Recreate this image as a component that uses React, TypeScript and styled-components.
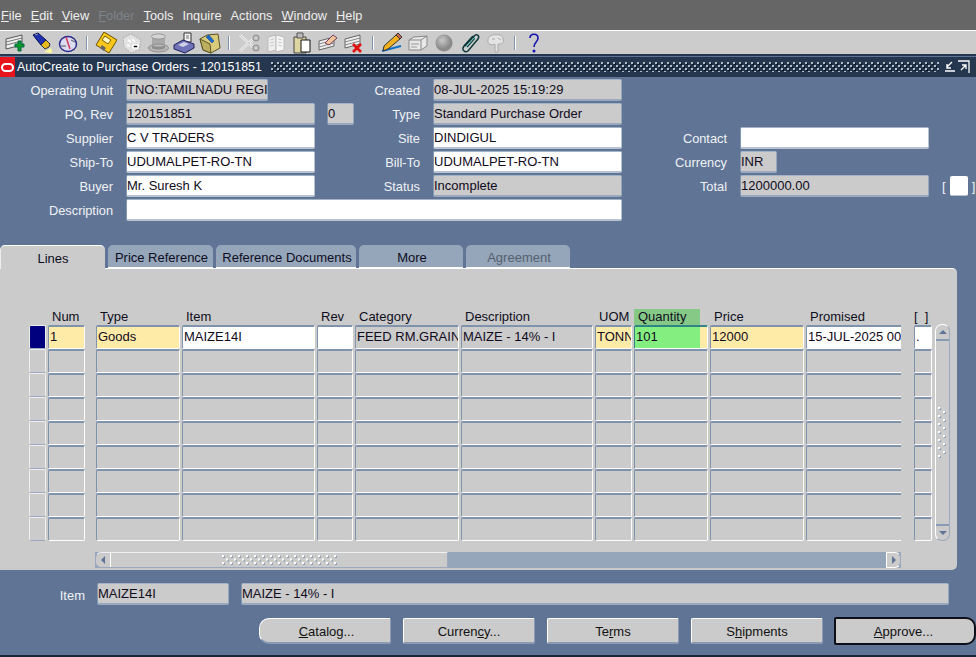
import React from "react";
import styled, { createGlobalStyle, css } from "styled-components";

const Global = createGlobalStyle`
  html, body { margin: 0; padding: 0; background: #607595; }
  #root { width: 976px; height: 657px; overflow: hidden; }
`;
const dots = (w: number, h: number, light: string, dark: string) => css`
  background-image:
    radial-gradient(circle at 1px 1px, ${light} 1px, transparent 1.1px),
    radial-gradient(circle at 1px 1px, ${light} 1px, transparent 1.1px),
    radial-gradient(circle at 2px 2px, ${dark} 1px, transparent 1.1px),
    radial-gradient(circle at 2px 2px, ${dark} 1px, transparent 1.1px);
  background-size: ${w}px ${h}px;
  background-position: 0 0, ${w / 2}px ${h / 2}px, 0 0, ${w / 2}px ${h / 2}px;
`;
const Page = styled.div`
  width: 976px; height: 657px; display: flex; flex-direction: column; position: relative;
  background: #607595; font-family: "Liberation Sans", Arial, sans-serif; font-size: 13px; color: #000; overflow: hidden;
  border-bottom: 2px solid #1a2436; box-sizing: border-box;
`;
const MenuBar = styled.div`
  height: 30px; background: #666; display: flex; gap: 9px; align-items: flex-start; padding: 8px 0 0 1px; box-sizing: border-box;
  color: #eee; font-size: 12.8px; line-height: 15px; flex: none;
`;
const MenuItem = styled.span<{ $off?: boolean }>`
  ${p => p.$off && css`color: #7d838b;`}
  u { text-underline-offset: 1px; }
`;
const ToolBar = styled.div`
  height: 23px; background: #ccc; border-top: 1px solid #fff; border-bottom: 2px solid #25364f; flex: none;
  display: flex; align-items: center; padding-left: 5px; margin-bottom: 1px;
`;
const Icon = styled.svg<{ $w?: number; $mr?: number }>`
  width: ${p => p.$w ?? 22}px; height: 22px; flex: none; margin-right: ${p => p.$mr ?? 4}px;
`;
const Sep = styled.i`
  width: 2px; height: 14px; background: linear-gradient(to right, #7f93ad 50%, #fff 50%); flex: none; margin: 0 7px 0 3px;
`;
const TitleBar = styled.div`
  height: 20px; background: #25364f; display: flex; align-items: center; color: #fff; font-size: 12.3px; flex: none; padding-right: 5px;
`;
const Logo = styled.div`
  width: 15px; height: 20px; background: #e8141c; display: flex; align-items: center; justify-content: center; flex: none;
  &::after { content: ""; width: 9px; height: 5px; border: 2px solid #fff; border-radius: 5px; }
`;
const Title = styled.span`
  margin-left: 2px; white-space: nowrap;
`;
const Dots = styled.div`
  flex: 1; height: 10px; margin: 0 4px 0 9px;
  ${dots(6, 6, "#b4bdca", "#0c1524")}
`;
const WinBtn = styled.svg`
  width: 14px; height: 14px; flex: none;
`;
const Form = styled.div`
  flex: none; height: 168px; padding-top: 2px; display: grid; box-sizing: border-box;
  grid-template-columns: 126px 189px 118px 189px 118px 189px 47px;
  grid-auto-rows: 22px; row-gap: 2px;
`;
const Label = styled.label`
  color: #f0f2f5; text-align: right; padding-right: 13px; line-height: 22px; white-space: nowrap; margin-top: 1px; font-size: 12.8px;
`;
const tones = { ro: "#cbcbcb", white: "#fff", req: "#ffeba8" };
const Field = styled.div<{ $tone?: keyof typeof tones; $w?: number; $ml?: number; $span?: number }>`
  box-sizing: border-box; height: 22px; line-height: 19px; padding: 0; overflow: hidden; white-space: nowrap; font-size: 13px; flex: none;
  background: ${p => tones[p.$tone ?? "ro"]}; color: #100a20;
  border-top: 1px solid #a4b2c6; border-left: 1px solid #8497b1;
  border-right: 1px solid ${p => (p.$tone === "white" ? "#b8c2d0" : "#98a8bf")}; border-bottom: 2px solid ${p => (p.$tone === "white" ? "#b8c2d0" : "#98a8bf")};
  border-radius: 2px;
  ${p => p.$w && css`width: ${p.$w}px;`}
  ${p => p.$ml && css`margin-left: ${p.$ml}px;`}
  ${p => p.$span && css`grid-column: span ${p.$span};`}
`;
const Pair = styled.div`
  display: flex; width: max-content;
`;
const Bracket = styled.div`
  display: flex; align-items: center; gap: 4px; color: #f0f2f5; font-size: 13px; height: 22px; margin-left: 13px;
`;
const Tick = styled.span`
  width: 18px; height: 20px; background: #fff; border-radius: 2px; border-bottom: 1px solid #b8c2d0; box-sizing: border-box; display: block; flex: none;
`;
const TabRow = styled.div`
  flex: none; height: 23px; display: flex; gap: 3px; position: relative; z-index: 1;
`;
const Tab = styled.div<{ $active?: boolean; $off?: boolean; $w: number }>`
  width: ${p => p.$w}px; box-sizing: border-box; display: flex; align-items: center; justify-content: center; height: 23px; font-size: 13px;
  border-radius: 5px 5px 0 0; white-space: nowrap; padding: 2px 0 0 2px;
  background: #95a5ba; color: #0d0d22; border-bottom: 1px solid #fff;
  ${p => p.$off && css`color: #55606e;`}
  ${p => p.$active && css`background: #cbcbcb; border-top: 1px solid #fff; border-bottom: none; height: 24px; border-left: 1px solid #eee; padding: 1px 0 0 0;`}
`;
const Panel = styled.div`
  flex: none; width: 957px; height: 302px; background: #cbcbcb; border-top: 1px solid #fff; border-radius: 0 5px 5px 0; box-sizing: border-box;
  padding-top: 40px; padding-left: 29px; position: relative;
`;
const cols = [
  { n: "Num", w: 37, g: 11 }, { n: "Type", w: 84, g: 2 }, { n: "Item", w: 133, g: 2 }, { n: "Rev", w: 36, g: 2 },
  { n: "Category", w: 104, g: 2 }, { n: "Description", w: 132, g: 2 }, { n: "UOM", w: 37, g: 2 }, { n: "Quantity", w: 74, g: 2 },
  { n: "Price", w: 94, g: 2 }, { n: "Promised", w: 95, g: 13 }, { n: "[  ]", w: 18, g: 3 },
];
const GridWrap = styled.div`
  display: grid; grid-template-columns: 17px 2px ${cols.map(c => `${c.w}px ${c.g}px`).join(" ")};
  grid-template-rows: 16px; grid-auto-rows: 24px; width: max-content;
`;
const Head = styled.div<{ $hl?: boolean; $pad?: number }>`
  font-size: 13px; line-height: 15px; white-space: pre; padding-left: ${p => p.$pad ?? 4}px; color: #0e0e20; height: 16px; box-sizing: border-box;
  ${p => p.$hl && css`background: linear-gradient(to right, #86c886 66px, transparent 66px);`}
`;
const Spacer = styled.div``;
const Cell = styled.div<{ $tone?: "ro" | "white" | "req"; $hl?: boolean; $open?: boolean }>`
  box-sizing: border-box; height: 24px; line-height: 19px; white-space: nowrap; overflow: hidden; padding-left: 1px; font-size: 13px; color: #100a20;
  background: ${p => tones[p.$tone ?? "ro"]};
  border-top: 2px solid #7f93ad; border-left: 1px solid #7f93ad; border-right: 1px solid #fff; border-bottom: 1px solid #fff; border-radius: 2px;
  ${p => p.$hl && css`background: linear-gradient(to right, #84ee80 65px, #ffeba8 65px); border-top-color: #2f8484; border-left-color: #2f8484;`}
  ${p => p.$open && css`border-right: none; border-radius: 2px 0 0 2px;`}
`;
const Sel = styled.div<{ $on?: boolean }>`
  box-sizing: border-box; height: 24px; border: 1px solid #eee; border-bottom-color: #9aa9bd; border-radius: 2px;
  background: ${p => (p.$on ? "#00007f" : "#cbcbcb")};
`;
const VScroll = styled.div`
  position: absolute; left: 935px; top: 55px; width: 15px; height: 217px; background: #cbcbcb; box-sizing: border-box;
  border: 1px solid #9aa9bd; border-left-color: #fff; border-top-color: #fff; border-radius: 7px; display: flex; flex-direction: column; justify-content: space-between; align-items: center;
`;
const VArrow = styled.div<{ $up?: boolean }>`
  width: 100%; height: 14px; display: flex; align-items: center; justify-content: center; flex: none;
  ${p => p.$up ? css`border-bottom: 2px solid #8a9bb3;` : css`border-top: 2px solid #8a9bb3;`}
  &::after { content: ""; border-left: 4px solid transparent; border-right: 4px solid transparent;
    ${p => p.$up ? css`border-bottom: 4px solid #607595;` : css`border-top: 4px solid #607595;`} }
`;
const VGrip = styled.div`
  width: 10px; height: 52px;
  ${dots(10, 8, "#fff", "#8fa0b6")}
`;
const HScroll = styled.div`
  position: absolute; left: 95px; top: 283px; width: 806px; height: 16px; display: flex; background: #95a5ba; box-sizing: border-box;
`;
const HThumb = styled.div`
  width: 353px; height: 100%; background: #cbcbcb; border: 1px solid #9aa9bd; border-top-color: #eef0f3; box-sizing: border-box; display: flex; align-items: center; border-radius: 6px 0 0 6px;
`;
const HLeft = styled.div`
  width: 14px; height: 100%; border-right: 1px solid #fff; display: flex; align-items: center; justify-content: center;
  &::after { content: ""; border-top: 4px solid transparent; border-bottom: 4px solid transparent; border-right: 4px solid #607595; }
`;
const HGrip = styled.div`
  width: 116px; height: 10px; margin-left: 111px;
  ${dots(8, 7, "#fff", "#8fa0b6")}
`;
const HRight = styled.div`
  margin-left: auto; width: 15px; height: 100%; background: #cbcbcb; border: 1px solid #fff; border-right-color: #9aa9bd; border-radius: 0 6px 6px 0; box-sizing: border-box; display: flex; align-items: center; justify-content: center;
  &::after { content: ""; border-top: 4px solid transparent; border-bottom: 4px solid transparent; border-left: 4px solid #607595; }
`;
const Footer = styled.div`
  flex: none; display: flex; align-items: center; height: 22px; margin-top: 13px;
`;
const FootLabel = styled.span`
  color: #f0f2f5; width: 85px; text-align: right; font-size: 13px; margin-right: 12px; margin-top: 2px;
`;
const Buttons = styled.div`
  flex: none; display: flex; gap: 12px; padding-left: 259px; margin-top: 13px; height: 26px;
`;
const Btn = styled.div<{ $first?: boolean; $default?: boolean }>`
  width: 132px; height: 26px; background: #cbcbcb; box-sizing: border-box; display: flex; align-items: center; justify-content: center;
  padding-top: 1px;
  font-size: 13px; color: #111; border-top: 1px solid #fff; border-left: 1px solid #fff; border-right: 1px solid #8a9bb3; border-bottom: 2px solid #8a9bb3; border-radius: 2px; white-space: nowrap; flex: none;
  ${p => p.$first && css`border-radius: 10px 2px 2px 10px; padding-left: 3px;`}
  ${p => p.$default && css`width: 142px; margin-left: -1px; height: 28px; margin-top: -1px; border: 2px solid #0e0e18; border-radius: 2px 10px 10px 2px; padding-right: 3px;`}
`;

const New = () => <Icon viewBox="0 0 22 22"><path d="M1 7l16-4v10L1 17z" fill="#eee" stroke="#555"/><path d="M1 10l16-4M1 13l16-4" stroke="#777"/><path d="M13 9h3v3h3v3h-3v4h-3v-4h-3v-3h3z" fill="#0a9a2a" stroke="#064"/></Icon>;
const Flash = () => <Icon viewBox="0 0 22 22"><path d="M2 3l5-2 8 7-5 5z" fill="#2230b0" stroke="#001050"/><path d="M4 3l3-1" stroke="#99a" /><path d="M10 13l5-5 4 4-1 3-4 2z" fill="#e8b820" stroke="#333"/><path d="M13 20l7-4 1 5z" fill="#ffff99"/></Icon>;
const Compass = () => <Icon viewBox="0 0 22 22"><ellipse cx="11" cy="12" rx="8.5" ry="7.5" fill="#dcdcf0" stroke="#2a2a90" strokeWidth="1.5"/><path d="M9 5l4 12" stroke="#d04060" strokeWidth="1.6"/><path d="M4 14h5M14 8l4 2" stroke="#555"/></Icon>;
const Floppy = () => <Icon viewBox="0 0 22 22"><path d="M9 0l13 8-8 13L1 13z" fill="#fac81c" stroke="#6a5000"/><path d="M10 4l6 4-3 4-6-4z" fill="#fff8c0" stroke="#7a6000"/><path d="M7 13l4 3-2 3-4-3z" fill="#666"/></Icon>;
const Scatter = () => <Icon viewBox="0 0 22 22"><path d="M2 6l8-4 10 6-2 10-8 3-7-6z" fill="#e2e2e2" stroke="#aeaeae" strokeDasharray="2 1"/><path d="M7 8l3 2M11 7l3 3M12 13h5v3h-5zM6 13l3 1" stroke="#fff" strokeWidth="1.6"/></Icon>;
const Hat = () => <Icon viewBox="0 0 22 22"><path d="M5 4v11c2 2 11 2 13 0V4z" fill="#a8a8a8"/><ellipse cx="11.5" cy="4.5" rx="7" ry="2.6" fill="#d4d4d4" stroke="#999"/><ellipse cx="11.5" cy="16" rx="10" ry="4" fill="#b8b8b8" stroke="#8c8c8c"/><path d="M5 13c2 2 11 2 13 0v3c-2 2-11 2-13 0z" fill="#8e8e8e"/></Icon>;
const Printer = () => <Icon viewBox="0 0 22 22"><path d="M11 1h7v9h-7z" fill="#f2f2f2" stroke="#333"/><path d="M13 4h3M13 6h3" stroke="#777"/><path d="M1 13l9-5 11 4v4l-9 5-11-4z" fill="#6f72b6" stroke="#20205a"/><path d="M5 13l6-3 5 2-6 3z" fill="#d0d0e6"/></Icon>;
const Folder = () => <Icon viewBox="0 0 22 22"><path d="M1 7l7-4 11-1 2 14-9 5-8-3z" fill="#d8cc7c" stroke="#5a5220"/><path d="M7 5l6 6 2-2-5-6z" fill="#1a6ad0" stroke="#0a3a80" strokeWidth=".5"/><path d="M1 7l10 5 1 9-8-3z" fill="#bcb060" stroke="#5a5220"/></Icon>;
const Scissors = () => <Icon viewBox="0 0 24 22" $w={24}><path d="M3 3l13 12M3 19L16 7" stroke="#eee" strokeWidth="2.6"/><path d="M3 3l13 12M3 19L16 7" stroke="#aaa" strokeWidth=".6"/><circle cx="19" cy="6" r="2.8" fill="none" stroke="#999" strokeWidth="1.4"/><circle cx="19" cy="16" r="2.8" fill="none" stroke="#999" strokeWidth="1.4"/></Icon>;
const Copy = () => <Icon viewBox="0 0 22 22"><path d="M3 5l8-2v15l-8 2z" fill="#eee" stroke="#bbb"/><path d="M11 3l8 2v13l-8 2z" fill="#f6f6f6" stroke="#bbb"/><path d="M5 8l4-1M5 11l4-1M5 14l4-1M13 7l4 1M13 10l4 1M13 13l4 1" stroke="#ccc"/></Icon>;
const Paste = () => <Icon viewBox="0 0 22 22"><path d="M3 5h12v16H3z" fill="#ddd6a0" stroke="#444"/><path d="M6 1h6v5H6z" fill="#bbb" stroke="#555"/><path d="M10 8h9v12h-9z" fill="#fff" stroke="#111"/></Icon>;
const Erase = () => <Icon viewBox="0 0 22 22"><path d="M2 9l15-4v9L2 18z" fill="#eee" stroke="#666"/><path d="M2 12l15-4M2 15l15-4" stroke="#888"/><path d="M8 11l8-8 4 3-8 7z" fill="#eec49c" stroke="#7a3a5a"/></Icon>;
const Del = () => <Icon viewBox="0 0 22 22"><path d="M2 7l15-4v9L2 16z" fill="#eee" stroke="#666"/><path d="M2 10l15-4M2 13l15-4" stroke="#888"/><path d="M10 12l8 8M18 12l-8 8" stroke="#e01010" strokeWidth="2.6"/></Icon>;
const Pencil = () => <Icon viewBox="0 0 22 22"><path d="M1 19l19-5" stroke="#1070c0" strokeWidth="2"/><path d="M2 19l1-5L15 3l4 4L7 17z" fill="#f0b020" stroke="#333"/><path d="M15 3l2-2 4 4-2 2z" fill="#d06a50" stroke="#333"/></Icon>;
const Box = () => <Icon viewBox="0 0 22 22"><path d="M2 8l5-3 13-1v10l-6 4H2z" fill="#e8e8e8" stroke="#888"/><path d="M2 8h12l6-4M14 8v10" stroke="#888" fill="none"/><path d="M4 12h8M4 15h6" stroke="#999"/></Icon>;
const Globe = () => <Icon viewBox="0 0 22 22"><defs><radialGradient id="g" cx="40%" cy="35%"><stop offset="0" stopColor="#c8c8c8"/><stop offset="1" stopColor="#8a8a8a"/></radialGradient></defs><circle cx="11" cy="11" r="8.5" fill="url(#g)"/></Icon>;
const Clip = () => <Icon viewBox="0 0 22 22"><path d="M6 14l9-10c3-3 6 0 4 3L9 19c-3 2-7-1-4-5l8-9c1-1 3 0 2 2l-7 8" fill="none" stroke="#103838" strokeWidth="1.5"/><path d="M7 15l9-10" stroke="#66d0d0" fill="none"/></Icon>;
const Bulb = () => <Icon viewBox="0 0 22 22" $mr={4}><path d="M3 8c0-4 5-6 8-5 2-1 7 0 7 4 2 3-2 6-5 5v8h-3v-8c-3 2-8 0-7-4z" fill="#e4e4e4" stroke="#aaa"/><path d="M7 7h3M13 6l3 2" stroke="#aaa"/></Icon>;
const Help = () => <Icon viewBox="0 0 22 22" $mr={0}><path d="M7 6c0-5 8-5 8 0 0 4-4 4-4 9" fill="none" stroke="#1414b0" strokeWidth="1.6"/><circle cx="11" cy="19" r="1.5" fill="#1414b0"/></Icon>;

type R = { t: string; tone?: "ro" | "white" | "req" };
const first: R[] = [
  { t: "1", tone: "req" }, { t: "Goods", tone: "req" }, { t: "MAIZE14I", tone: "white" }, { t: "", tone: "white" },
  { t: "FEED RM.GRAINS.MAIZE" }, { t: "MAIZE - 14% - I" }, { t: "TONNE", tone: "req" }, { t: "101", tone: "req" },
  { t: "12000", tone: "req" }, { t: "15-JUL-2025 00:00:00", tone: "white" }, { t: ".", tone: "white" },
];
const menus = ["File", "Edit", "View", "Folder", "Tools", "Inquire", "Actions", "Window", "Help"];
const plain: Record<string, boolean> = { Inquire: true, Actions: true };

export default function App() {
  return (
    <Page>
      <Global />
      <MenuBar>
        {menus.map(m => (
          <MenuItem key={m} $off={m === "Folder"}>
            {plain[m] ? m : <><u>{m[0]}</u>{m.slice(1)}</>}
          </MenuItem>
        ))}
      </MenuBar>
      <ToolBar>
        <New /><Flash /><Compass /><Sep /><Floppy /><Scatter /><Hat />
        <Printer /><Folder /><Sep /><Scissors /><Copy /><Paste /><Erase /><Del /><Sep /><Pencil /><Box /><Globe /><Clip /><Bulb /><Sep /><Help />
      </ToolBar>
      <TitleBar>
        <Logo />
        <Title>AutoCreate to Purchase Orders - 120151851</Title>
        <Dots />
        <WinBtn viewBox="0 0 14 14"><path d="M9 2L4 7M4 4v4h4M2 11h10" fill="none" stroke="#fff" strokeWidth="1.4"/></WinBtn>
        <WinBtn viewBox="0 0 14 14"><path d="M1 1h11v12M4 10l5-5M5 5h4v4" fill="none" stroke="#fff" strokeWidth="1.3"/></WinBtn>
      </TitleBar>
      <Form>
        <Label>Operating Unit</Label>
        <Field $w={142}>TNO:TAMILNADU REGI</Field>
        <Label>Created</Label>
        <Field $w={189}>08-JUL-2025 15:19:29</Field>
        <span /><span /><span />

        <Label>PO, Rev</Label>
        <Pair><Field $w={189}>120151851</Field><Field $w={27} $ml={12}>0</Field></Pair>
        <Label>Type</Label>
        <Field $w={189}>Standard Purchase Order</Field>
        <span /><span /><span />

        <Label>Supplier</Label>
        <Field $tone="white" $w={189}>C V TRADERS</Field>
        <Label>Site</Label>
        <Field $tone="white" $w={189}>DINDIGUL</Field>
        <Label>Contact</Label>
        <Field $tone="white" $w={189} />
        <span />

        <Label>Ship-To</Label>
        <Field $tone="white" $w={189}>UDUMALPET-RO-TN</Field>
        <Label>Bill-To</Label>
        <Field $tone="white" $w={189}>UDUMALPET-RO-TN</Field>
        <Label>Currency</Label>
        <Field $w={37}>INR</Field>
        <span />

        <Label>Buyer</Label>
        <Field $tone="white" $w={189}>Mr. Suresh K</Field>
        <Label>Status</Label>
        <Field $w={189}>Incomplete</Field>
        <Label>Total</Label>
        <Field $w={189}>1200000.00</Field>
        <Bracket>[<Tick />]</Bracket>

        <Label>Description</Label>
        <Field $tone="white" $w={496} $span={3} />
      </Form>
      <TabRow>
        <Tab $active $w={105}>Lines</Tab>
        <Tab $w={105}>Price Reference</Tab>
        <Tab $w={140}>Reference Documents</Tab>
        <Tab $w={104}>More</Tab>
        <Tab $off $w={104}>Agreement</Tab>
      </TabRow>
      <Panel>
        <GridWrap>
          <Spacer /><Spacer />
          {cols.map(c => (
            <React.Fragment key={c.n}>
              <Head $hl={c.n === "Quantity"} $pad={c.n === "[  ]" ? 0 : undefined}>{c.n}</Head>
              <Spacer />
            </React.Fragment>
          ))}
          {Array.from({ length: 9 }).map((_, r) => (
            <React.Fragment key={r}>
              <Sel $on={r === 0} /><Spacer />
              {cols.map((c, i) => (
                <React.Fragment key={c.n}>
                  <Cell $tone={r === 0 ? first[i].tone : "ro"} $hl={r === 0 && c.n === "Quantity"} $open={c.n === "Promised"}>
                    {r === 0 ? first[i].t : ""}
                  </Cell>
                  <Spacer />
                </React.Fragment>
              ))}
            </React.Fragment>
          ))}
        </GridWrap>
        <VScroll><VArrow $up /><VGrip /><VArrow /></VScroll>
        <HScroll>
          <HThumb><HLeft /><HGrip /></HThumb>
          <HRight />
        </HScroll>
      </Panel>
      <Footer>
        <FootLabel>Item</FootLabel>
        <Field $w={132}>MAIZE14I</Field>
        <Field $w={708} $ml={12}>MAIZE - 14% - I</Field>
      </Footer>
      <Buttons>
        <Btn $first><span><u>C</u>atalog...</span></Btn>
        <Btn><span>Curren<u>c</u>y...</span></Btn>
        <Btn><span>Te<u>r</u>ms</span></Btn>
        <Btn><span>S<u>h</u>ipments</span></Btn>
        <Btn $default><span><u>A</u>pprove...</span></Btn>
      </Buttons>
    </Page>
  );
}
